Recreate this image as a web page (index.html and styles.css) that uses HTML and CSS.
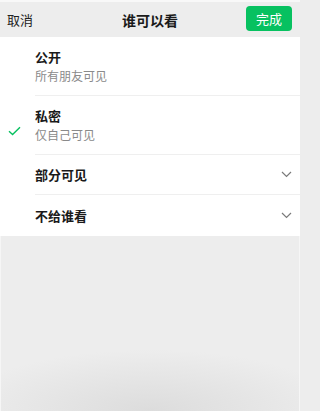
FILE: index.html
```html
<!DOCTYPE html>
<html lang="zh">
<head>
<meta charset="utf-8">
<link rel="stylesheet" href="styles.css">
</head>
<body>
<div class="page">
  <header class="bar">
    <span class="cancel">取消</span>
    <span class="title">谁可以看</span>
    <span class="done">完成</span>
  </header>
  <ul class="list">
    <li class="row tall">
      <span class="mark"></span>
      <div class="body">
        <div class="name">公开</div>
        <div class="sub">所有朋友可见</div>
      </div>
    </li>
    <li class="row tall">
      <span class="mark">
        <svg width="13" height="10" viewBox="0 0 13 10"><path d="M1 5.2 L4.6 8.6 L12 1.2" fill="none" stroke="#07c160" stroke-width="1.4"/></svg>
      </span>
      <div class="body">
        <div class="name">私密</div>
        <div class="sub">仅自己可见</div>
      </div>
    </li>
    <li class="row short">
      <span class="mark"></span>
      <div class="body flat">
        <div class="name">部分可见</div>
        <svg class="chev" width="11" height="7" viewBox="0 0 11 7"><path d="M1 1 L5.5 5.5 L10 1" fill="none" stroke="#7a7a7a" stroke-width="1.2"/></svg>
      </div>
    </li>
    <li class="row short last">
      <span class="mark"></span>
      <div class="body flat">
        <div class="name">不给谁看</div>
        <svg class="chev" width="11" height="7" viewBox="0 0 11 7"><path d="M1 1 L5.5 5.5 L10 1" fill="none" stroke="#7a7a7a" stroke-width="1.2"/></svg>
      </div>
    </li>
  </ul>
  <div class="rest"></div>
</div>
</body>
</html>
```
FILE: styles.css
```css
* { box-sizing: border-box; }
html, body {
  margin: 0;
  padding: 0;
  height: 100%;
}
body {
  font-family: "Noto Sans CJK SC", "Noto Sans", sans-serif;
  background: #ededed;
}
.page {
  display: flex;
  flex-direction: column;
  width: 300px;
  height: 411px;
  border-top: 2px solid #f8f8f8;
}
.bar {
  height: 35px;
  background: #ededed;
  display: flex;
  align-items: center;
  justify-content: space-between;
  padding: 0 8px 0 7px;
  position: relative;
}
.cancel {
  font-size: 13px;
  color: #222;
}
.title {
  position: absolute;
  left: 0;
  right: 0;
  text-align: center;
  font-size: 14px;
  font-weight: 700;
  color: #1a1a1a;
  pointer-events: none;
}
.done {
  background: #07c160;
  color: #fff;
  font-size: 13px;
  width: 46px;
  height: 25px;
  line-height: 25px;
  text-align: center;
  border-radius: 4px;
  margin-top: -2px;
}
.list {
  list-style: none;
  margin: 0;
  padding: 0;
  background: #fff;
}
.row {
  display: flex;
  align-items: stretch;
}
.mark {
  width: 35px;
  flex: none;
  display: flex;
  align-items: center;
  justify-content: center;
  padding-top: 10px;
  padding-right: 6px;
}
.body {
  flex: 1;
  border-bottom: 1px solid #efefef;
  display: flex;
  flex-direction: column;
  justify-content: center;
  padding-right: 8px;
}
.last .body { border-bottom: none; }
.tall .body { height: 59px; padding-bottom: 1px; }
.short .body { height: 40px; }
.last .body { height: 41px; }
.flat {
  flex-direction: row;
  align-items: center;
  justify-content: space-between;
}
.name {
  font-size: 13px;
  font-weight: 700;
  color: #1a1a1a;
  line-height: 18px;
}
.sub {
  font-size: 12px;
  color: #8a8a8a;
  line-height: 17px;
  margin-top: 1px;
}
.rest {
  flex: 1;
  background:
    radial-gradient(ellipse 65% 35% at 50% 100%, #dcdcdc 0%, rgba(220,220,220,0) 100%),
    #ededed;
  border-left: 1px solid #f6f6f6;
  border-right: 1px solid #f6f6f6;
}
```
